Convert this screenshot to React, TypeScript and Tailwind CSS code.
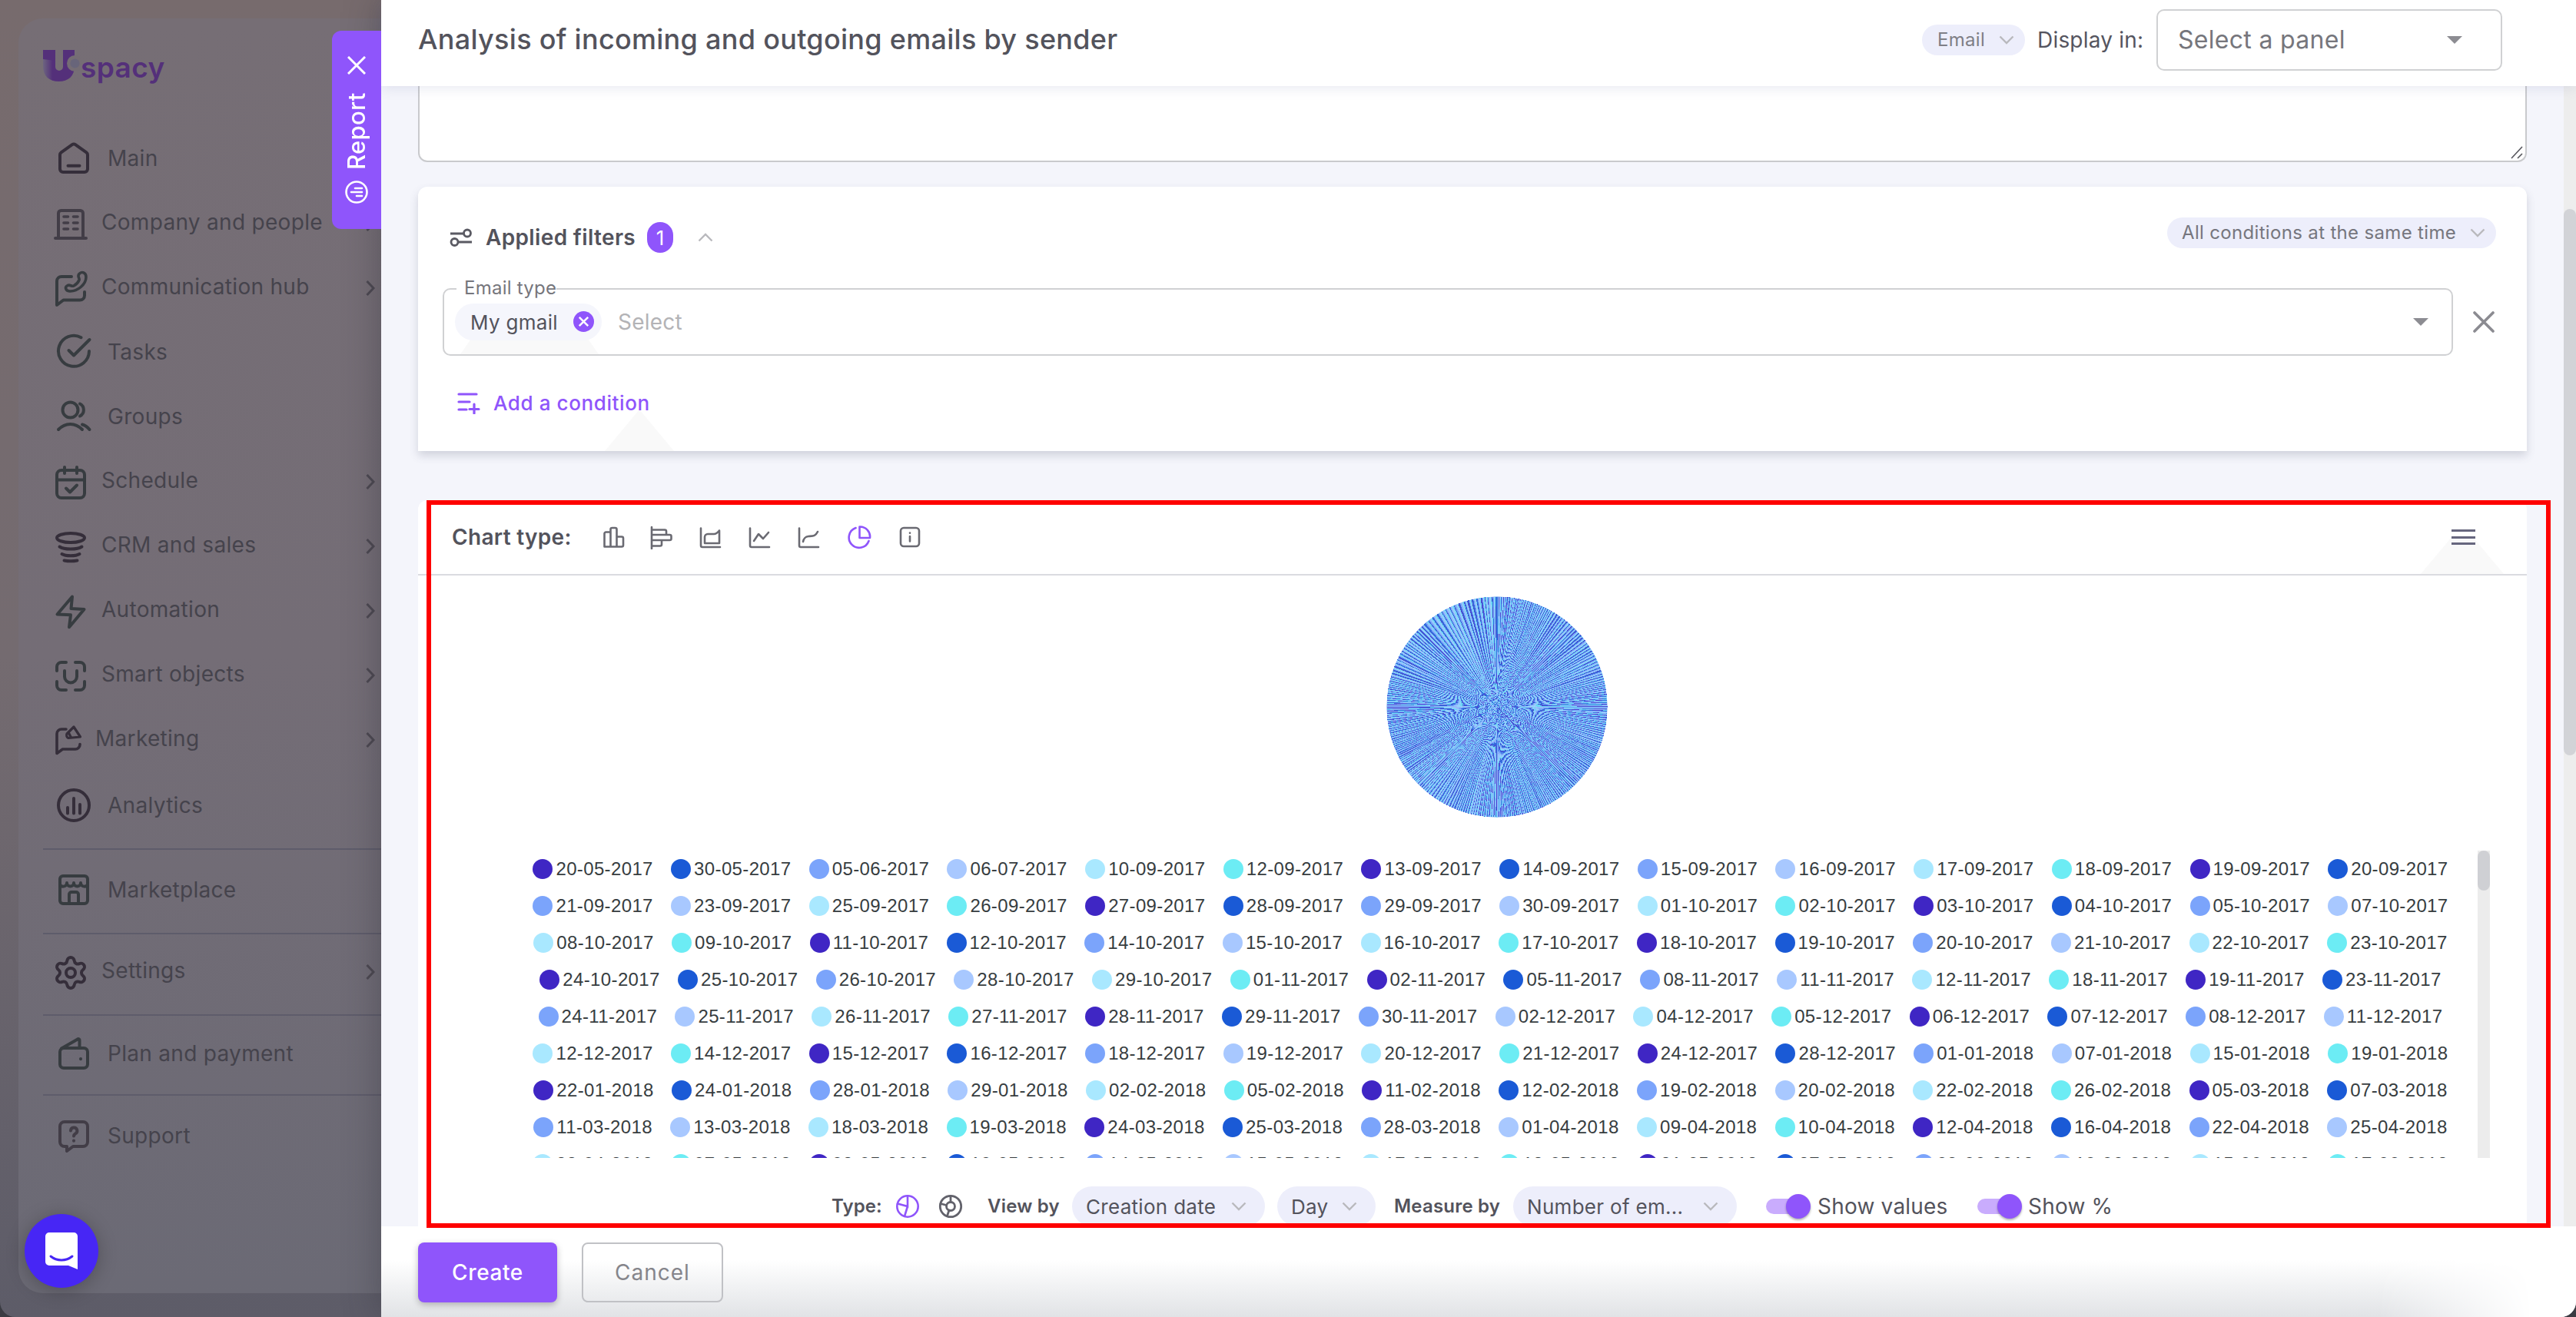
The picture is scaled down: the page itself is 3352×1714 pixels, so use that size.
import React from 'react';
import { Settings } from 'lucide-react';

interface IconProps {
  className?: string;
  children: React.ReactNode;
}

const Icon: React.FC<IconProps> = ({ className = '', children }) => (
  <svg
    viewBox="0 0 48 48"
    className={`size-12 shrink-0 ${className}`}
    fill="none"
    stroke="currentColor"
    strokeWidth="4"
    strokeLinecap="round"
    strokeLinejoin="round"
  >
    {children}
  </svg>
);

const HomeIcon = () => (
  <Icon className="text-[#352e3a]">
    <path d="M6 19.5a4 4 0 0 1 1.6-3.2L22 6.2a3.4 3.4 0 0 1 4 0l14.4 10.1a4 4 0 0 1 1.6 3.2V38a4 4 0 0 1-4 4H10a4 4 0 0 1-4-4Z" />
    <path d="M16.5 33.8h15" />
  </Icon>
);

const CompanyIcon = () => (
  <Icon className="text-[#423d47]">
    <path d="M8 42V9.5A3.5 3.5 0 0 1 11.5 6h25A3.5 3.5 0 0 1 40 9.5V42M4 42h40" />
    <path d="M15 14h5.5M27.5 14H33M15 22h5.5M27.5 22H33M15 30h5.5M27.5 30H33" strokeWidth="3.6" />
  </Icon>
);

const HubIcon = () => (
  <Icon className="text-[#373c40]">
    <path d="M25 8H12a6 6 0 0 0-6 6v31l8.5-6.5H36a6 6 0 0 0 6-6V28" />
    <path d="M35 4.5c3.5-4 9-1.5 9 4C44 18 33 27.5 22.5 27c-5.5-.5-6.5-5.5-2.5-7.5 3.5-1.5 5 2 8 .5 2.5-1.5 6-5 7-7.5 1-3-3-4.5 0-8Z" strokeWidth="3.6" />
  </Icon>
);

const TasksIcon = () => (
  <Icon className="text-[#373c40]">
    <path d="M33.5 5.2A20 20 0 1 0 44 23" />
    <path d="m17.5 22 6.5 6.5L44.5 8" />
  </Icon>
);

const GroupsIcon = () => (
  <Icon className="text-[#373c40]">
    <circle cx="19.5" cy="15.5" r="10" />
    <path d="M32 7.5a9 9 0 0 1 0 16M4 41c9-9.5 22-9.5 31 0M35 34.5c4 1 7 3.5 9.5 6.5" />
  </Icon>
);

const ScheduleIcon = () => (
  <Icon className="text-[#373c40]">
    <rect x="6" y="8" width="36" height="36" rx="6" />
    <path d="M6 20.5h36M16 4v8M32 4v8M18 31.5l5 5 9-9" />
  </Icon>
);

const CrmIcon = () => (
  <Icon className="text-[#352e3a]">
    <ellipse cx="24" cy="12" rx="18" ry="6" />
    <path d="M9.5 23.5c6 4 23 4 29 0M12.5 33c5 3 18 3 23 0M15.5 41.5c5 1 12 1 17 0" />
  </Icon>
);

const BoltIcon = () => (
  <Icon className="text-[#373c40]">
    <path d="M26 4.5 6.5 27.5l17.5.8-2 16L41.5 21 24.5 20Z" />
  </Icon>
);

const SmartIcon = () => (
  <Icon className="text-[#373c40]">
    <path d="M18 6h-6a6 6 0 0 0-6 6v5M30 6h6a6 6 0 0 1 6 6v5M6 31v5a6 6 0 0 0 6 6h6M42 31v5a6 6 0 0 1-6 6h-6" />
    <path d="M16 17v7.5a8 8 0 0 0 16 0V17" />
  </Icon>
);

const MarketingIcon = () => (
  <Icon className="text-[#352e3a]">
    <path d="M21 9h-6a6 6 0 0 0-6 6v25.5L16.5 35H33a6 6 0 0 0 6-6v-.5" strokeWidth="3.6" />
    <path d="m31 6 8.5 13L24 20.5a4 4 0 0 1-2-5.5ZM24.5 14l3 6" strokeWidth="3.2" />
  </Icon>
);

const AnalyticsIcon = () => (
  <Icon className="text-[#352e3a]">
    <circle cx="24" cy="24" r="20" />
    <path d="M16 27v7.5M24 15v19.5M32 23v11.5" />
  </Icon>
);

const MarketplaceIcon = () => (
  <Icon className="text-[#373c40]">
    <rect x="6" y="6" width="36" height="36" rx="4" />
    <path d="M6 16c0 5 9 5 9-1 0 6 9 6 9 0 0 6 9 6 9 0 0 6 9 6 9 1M18 42V30a3 3 0 0 1 3-3h6a3 3 0 0 1 3 3v12" />
  </Icon>
);

const WalletIcon = () => (
  <Icon className="text-[#373c40]">
    <rect x="6" y="17" width="36" height="26" rx="5" />
    <path d="M8 17.5 29 5.5a1.5 1.5 0 0 1 2.5 1.3V17M33 31v.2" />
  </Icon>
);

const SupportIcon = () => (
  <Icon className="text-[#423d47]">
    <path d="M12 6h24a6 6 0 0 1 6 6v20a6 6 0 0 1-6 6H23l-8 6v-6h-3a6 6 0 0 1-6-6V12a6 6 0 0 1 6-6Z" />
    <path d="M20 17.5a4.2 4.2 0 1 1 6 4c-1.5 1-2 1.5-2 3M24 30.5v.2" />
  </Icon>
);

const ChevronRight = () => (
  <svg viewBox="0 0 12 20" className="w-3 h-5 mr-2 ml-auto mb-0.5 shrink-0 text-[#4c4851]" fill="none" stroke="currentColor" strokeWidth="3">
    <path d="m1.5 1 8.5 9-8.5 9" />
  </svg>
);

const ChevronDown = ({ className = '' }: { className?: string }) => (
  <svg viewBox="0 0 20 12" className={`w-5 h-3 shrink-0 text-[#b9b9bd] ${className}`} fill="none" stroke="currentColor" strokeWidth="2.4">
    <path d="m1.5 1.5 8.5 8.5 8.5-8.5" />
  </svg>
);

const CaretDown = ({ className = '' }: { className?: string }) => (
  <svg viewBox="0 0 20 10" className={`w-5 h-2.5 shrink-0 ${className}`} fill="#8c8c92">
    <path d="M0 0h20L10 10Z" />
  </svg>
);

const NavItem = ({ icon, label }: { icon: React.ReactNode; label: string }) => (
  <div className="flex items-center h-[84px] pl-12">
    {icon}
    <span className="ml-[20px]">{label}</span>
  </div>
);

const NavGroup = ({ icon, label }: { icon: React.ReactNode; label: string }) => (
  <div className="flex items-center h-[84px] pl-11 pt-1">
    {icon}
    <span className="ml-4 mb-1.5">{label}</span>
    <ChevronRight />
  </div>
);

const Divider = ({ className = '' }: { className?: string }) => (
  <div className={`ml-8 h-0.5 shrink-0 bg-[#5e5c6b] ${className}`} />
);

const Logo = () => (
  <div className="flex h-[140px] pl-8 pt-[41px]">
    <svg viewBox="0 0 48 48" className="size-12 shrink-0">
      <defs>
        <linearGradient id="logo" x1="0" y1="0" x2="1" y2="0">
          <stop offset="0" stopColor="#6d6580" />
          <stop offset="0.3" stopColor="#54307a" />
        </linearGradient>
      </defs>
      <path d="M0 0h16v22a5 5 0 0 0 10 0V0h15v21c0 13-8 20-20.5 20S0 34 0 21Z" fill="url(#logo)" />
      <path d="M0 0h16v14L0 12Z" fill="#54307a" />
      <circle cx="41.5" cy="17.5" r="10.5" fill="#756d74" />
      <circle cx="41.5" cy="17.5" r="6" fill="#68657a" />
    </svg>
    <span className="mt-[1px] ml-[1px] text-[37px] leading-[44px] font-semibold tracking-[0.4px] text-[#54307a]">spacy</span>
  </div>
);

const Sidebar = () => (
  <aside className="w-[496px] shrink-0 pl-6 pt-6 pb-[31px] bg-linear-to-b from-[#776b6d] via-[#746b70] to-[#5d5c68]">
    <div className="flex flex-col h-[1659px] rounded-l-[32px] bg-linear-to-b from-[#766e75] via-[#746d76] to-[#6b6a75] text-[28px] tracking-[0.3px] text-[#45434c] whitespace-nowrap">
      <Logo />
      <NavItem icon={<HomeIcon />} label="Main" />
      <NavGroup icon={<CompanyIcon />} label="Company and people" />
      <NavGroup icon={<HubIcon />} label="Communication hub" />
      <NavItem icon={<TasksIcon />} label="Tasks" />
      <NavItem icon={<GroupsIcon />} label="Groups" />
      <NavGroup icon={<ScheduleIcon />} label="Schedule" />
      <NavGroup icon={<CrmIcon />} label="CRM and sales" />
      <NavGroup icon={<BoltIcon />} label="Automation" />
      <NavGroup icon={<SmartIcon />} label="Smart objects" />
      <div className="flex items-center h-[84px] pl-[41px] pt-1">
        <MarketingIcon />
        <span className="ml-[11px] mb-1.5">Marketing</span>
        <ChevronRight />
      </div>
      <div className="pt-0.5 -mb-0.5">
        <NavItem icon={<AnalyticsIcon />} label="Analytics" />
      </div>
      <Divider className="mt-4 mb-2.5" />
      <NavItem icon={<MarketplaceIcon />} label="Marketplace" />
      <Divider className="mt-3.5 mb-1.5" />
      <NavGroup icon={<Settings className="size-12 shrink-0 text-[#352e3a]" />} label="Settings" />
      <Divider className="mt-3.5 mb-[7px]" />
      <NavItem icon={<WalletIcon />} label="Plan and payment" />
      <Divider className="mt-[11px] mb-2.5" />
      <NavItem icon={<SupportIcon />} label="Support" />
    </div>
  </aside>
);

// Tab that sticks out of the drawer on its left side
const ReportTab = () => (
  <div className="absolute left-[432px] top-10 w-16 h-[258px] rounded-l-[12px] bg-[#8f55fb] text-white flex flex-col items-center pt-[33px] z-20">
    <svg viewBox="0 0 24 24" className="size-6 shrink-0" fill="none" stroke="currentColor" strokeWidth="3">
      <path d="m1 1 22 22M23 1 1 23" />
    </svg>
    <span className="mt-[14px] h-[110px] [writing-mode:vertical-rl] rotate-180 text-[31px] leading-[40px] font-medium tracking-[0.3px] flex items-center">Report</span>
    <svg viewBox="0 0 30 30" className="size-[30px] mt-3.5 shrink-0 -rotate-90" fill="none" stroke="currentColor" strokeWidth="2.6" strokeLinecap="round">
      <circle cx="15" cy="15" r="13.5" />
      <path d="M10 15v7M15 8v14M20 13v9" />
    </svg>
  </div>
);

const Header = () => (
  <header className="relative z-10 flex items-center h-28 pb-3.5 pl-12 pr-24 bg-white shadow-[0_2px_16px_rgba(100,105,160,0.16)] shrink-0 whitespace-nowrap">
    <h1 className="mt-[4px] text-[36px] font-medium tracking-[0.29px] text-[#53535c]">Analysis of incoming and outgoing emails by sender</h1>
    <div className="flex items-center ml-auto mt-1.5">
      <div className="flex items-center justify-between w-[134px] h-10 pl-5 pr-[14px] rounded-full bg-[#edeefb] text-[24px] tracking-[0.3px] text-[#7f7f86]">
        Email
        <ChevronDown />
      </div>
      <span className="w-[155px] ml-4 text-[28px] tracking-[0.2px] text-[#55555f]">Display in:</span>
      <div className="flex items-center justify-between w-[450px] h-20 pl-[26px] pr-[50px] rounded-[10px] border-2 border-[#d0d1d3] text-[32px] tracking-[0.3px] text-[#76767c]">
        Select a panel
        <CaretDown />
      </div>
    </div>
  </header>
);

const FiltersCard = () => (
  <section className="relative h-[344px] shrink-0 mt-8 rounded-t-[12px] bg-white shadow-[0_6px_12px_rgba(70,75,100,0.2)] whitespace-nowrap">
    <svg viewBox="0 0 90 54" className="absolute left-[243px] bottom-0 w-[90px] h-[54px]" fill="#f9f9f9">
      <path d="M45 0 90 54H0Z" />
    </svg>
    <div className="flex items-center h-[132px] pl-[41px] pr-10">
      <svg viewBox="0 0 30 24" className="w-[30px] h-6" fill="none" stroke="#5a5a63" strokeWidth="2.8">
        <path d="M1 7h17M12 18h17" />
        <circle cx="23" cy="6.5" r="4.5" />
        <circle cx="6.5" cy="18" r="4.5" />
      </svg>
      <span className="ml-[17px] text-[28px] font-semibold tracking-[0.35px] text-[#53535c]">Applied filters</span>
      <span className="flex items-center justify-center w-[34px] h-10 ml-[15px] rounded-full bg-[#8f55fb] text-[26px] text-white">1</span>
      <ChevronDown className="ml-8 rotate-180" />
      <div className="flex items-center justify-between w-[428px] h-10 mb-3 ml-auto pl-[19px] pr-[14px] rounded-full bg-[#edeefb] text-[24px] tracking-[0.33px] text-[#76767e]">
        All conditions at the same time
        <ChevronDown />
      </div>
    </div>
    <div className="flex items-center pl-8">
      <div className="relative flex items-center w-[2616px] h-[88px] pl-3.5 rounded-[10px] border-2 border-[#d0d1d3]">
        <svg viewBox="0 0 180 20" className="absolute left-[21px] bottom-0 w-[180px] h-5" fill="#f9f9f9">
          <path d="M14 0h152l14 20H0Z" />
        </svg>
        <span className="absolute left-4 -top-[17px] pl-[10px] bg-white text-[24px] leading-[30px] tracking-[0.25px] text-[#76767c]">Email type</span>
        <div className="relative flex items-center w-[191px] h-[48px] pl-5 rounded-full bg-[#f5f6fc] text-[26px] tracking-[0.3px] text-[#53535c]">
          My gmail
          <svg viewBox="0 0 26 26" className="size-[27px] absolute left-[154px] top-[10px]">
            <circle cx="13" cy="13" r="13" fill="#8f55fb" />
            <path d="m7.5 7.5 11 11M18.5 7.5l-11 11" stroke="#fff" strokeWidth="2.4" />
          </svg>
        </div>
        <span className="ml-[21px] text-[28px] tracking-[0.2px] text-[#b3b3b6]">Select</span>
        <CaretDown className="ml-auto mr-[30px]" />
      </div>
      <svg viewBox="0 0 28 28" className="size-7 ml-[26px]" fill="none" stroke="#8b8b91" strokeWidth="3.6" strokeLinecap="round">
        <path d="m2 2 24 24M26 2 2 26" />
      </svg>
    </div>
    <div className="relative flex items-center h-[123px] pl-[50px] text-[26px] font-medium tracking-[0.6px] text-[#8f55fb]">
      <svg viewBox="0 0 32 28" className="w-8 h-7" fill="none" stroke="currentColor" strokeWidth="3.2" strokeLinecap="round">
        <path d="M3 2h23M3 12h14M3 22h10M23 15v12M17 21.5h12" />
      </svg>
      <span className="ml-[16px]">Add a condition</span>
    </div>
  </section>
);

const ChartTypes = () => (
  <div className="flex items-center ml-[39px] text-[#6a6a72] [&>svg]:size-8 [&>svg]:shrink-0">
    <svg viewBox="0 0 32 32" fill="none" stroke="currentColor" strokeWidth="2.6" strokeLinejoin="round">
      <path d="M3.5 28.5V11.5a2 2 0 0 1 2-2h6V6a2 2 0 0 1 2-2h4a2 2 0 0 1 2 2v9.5h6.5a2 2 0 0 1 2 2v9a2 2 0 0 1-2 2ZM11.5 9.5v19M19.5 15.5v13" />
    </svg>
    <svg viewBox="0 0 32 32" className="ml-[30px]" fill="none" stroke="currentColor" strokeWidth="2.6" strokeLinecap="round" strokeLinejoin="round">
      <path d="M3 3v28M3 6.5h17a2 2 0 0 1 2 2V13H3M22 13h4.5a2 2 0 0 1 2 2v3a2 2 0 0 1-2 2H3M16 20v5.5a2 2 0 0 1-2 2H3" />
    </svg>
    <svg viewBox="0 0 32 32" className="ml-[31px]" fill="none" stroke="currentColor" strokeWidth="2.6" strokeLinecap="round" strokeLinejoin="round">
      <path d="M4 4.5V27a2 2 0 0 0 2 2h23M9 24V16a4 4 0 0 1 4-4h8c3 0 5-2 7-4.5V24Z" />
    </svg>
    <svg viewBox="0 0 32 32" className="ml-[32px]" fill="none" stroke="currentColor" strokeWidth="2.6" strokeLinecap="round" strokeLinejoin="round">
      <path d="M4 4.5V27a2 2 0 0 0 2 2h23M9 21l6-9 6 6 7-8" />
    </svg>
    <svg viewBox="0 0 32 32" className="ml-[32px]" fill="none" stroke="currentColor" strokeWidth="2.6" strokeLinecap="round" strokeLinejoin="round">
      <path d="M4 4.5V27a2 2 0 0 0 2 2h23M9 22c1-5 3-6.5 7-7 6-.5 9 0 12-6" />
    </svg>
    <svg viewBox="0 0 32 32" className="ml-[34px] text-[#8f55fb]" fill="none" stroke="currentColor" strokeWidth="2.6" strokeLinecap="round" strokeLinejoin="round">
      <path d="M11.5 4A13.3 13.3 0 1 0 28.5 21M16.5 2.5A13 13 0 0 1 30 17H16.5Z" />
    </svg>
    <svg viewBox="0 0 32 32" className="ml-[34px]" fill="none" stroke="currentColor" strokeWidth="2.6" strokeLinecap="round" strokeLinejoin="round">
      <rect x="4" y="4" width="24" height="24" rx="4" />
      <path d="M16 15v6.5M16 10.5v.2" />
    </svg>
  </div>
);

const PALETTE = ['#3f26c4', '#1a5ad6', '#7ba4fb', '#a8c8ff', '#a9e8ff', '#6cecf4'];
const DOTS = ['bg-[#3f26c4]', 'bg-[#1a5ad6]', 'bg-[#7ba4fb]', 'bg-[#a8c8ff]', 'bg-[#a9e8ff]', 'bg-[#6cecf4]'];

const noise = (i: number) => {
  const x = Math.sin(i * 12.9898) * 43758.5453;
  return x - Math.floor(x);
};

const sliceAngle = (deg: number, i: number) => {
  const wobble = 0.3 + noise(i) * 1.4;
  if (deg > 315 && deg < 316 && i % 6 === 0) return 1.6;
  if (deg > 318 && deg < 360) return 0.42 * wobble;
  if (deg > 286 && deg < 318) return 0.3 * wobble;
  if (deg > 30 && deg < 72) return 0.27 * wobble;
  if (deg > 190 && deg < 220) return 0.24 * wobble;
  return 0.18 * wobble;
};

const buildSlices = () => {
  const list: { d: string; fill: string }[] = [];
  const r = 143.5;
  const point = (deg: number) => {
    const a = ((deg - 90) * Math.PI) / 180;
    return `${(144 + r * Math.cos(a)).toFixed(2)} ${(144 + r * Math.sin(a)).toFixed(2)}`;
  };
  let deg = 0;
  let i = 0;
  while (deg < 360) {
    const next = Math.min(360, deg + sliceAngle(deg, i));
    list.push({ d: `M144 144L${point(deg)}L${point(next)}Z`, fill: PALETTE[i % PALETTE.length] });
    deg = next;
    i += 1;
  }
  return list;
};

const slices = buildSlices();

const PieChart = () => (
  <svg viewBox="0 0 288 288" className="size-[288px] shrink-0">
    <circle cx="144" cy="144" r="143.5" fill="#689dec" />
    <g shapeRendering="crispEdges">
      {slices.map((s, i) => (
        <path key={i} d={s.d} fill={s.fill} />
      ))}
    </g>
    <circle cx="144" cy="144" r="143.5" fill="#6aa2f2" opacity="0.3" />
  </svg>
);

const legendRows: string[][] = [
  ['20-05-2017', '30-05-2017', '05-06-2017', '06-07-2017', '10-09-2017', '12-09-2017', '13-09-2017', '14-09-2017', '15-09-2017', '16-09-2017', '17-09-2017', '18-09-2017', '19-09-2017', '20-09-2017'],
  ['21-09-2017', '23-09-2017', '25-09-2017', '26-09-2017', '27-09-2017', '28-09-2017', '29-09-2017', '30-09-2017', '01-10-2017', '02-10-2017', '03-10-2017', '04-10-2017', '05-10-2017', '07-10-2017'],
  ['08-10-2017', '09-10-2017', '11-10-2017', '12-10-2017', '14-10-2017', '15-10-2017', '16-10-2017', '17-10-2017', '18-10-2017', '19-10-2017', '20-10-2017', '21-10-2017', '22-10-2017', '23-10-2017'],
  ['24-10-2017', '25-10-2017', '26-10-2017', '28-10-2017', '29-10-2017', '01-11-2017', '02-11-2017', '05-11-2017', '08-11-2017', '11-11-2017', '12-11-2017', '18-11-2017', '19-11-2017', '23-11-2017'],
  ['24-11-2017', '25-11-2017', '26-11-2017', '27-11-2017', '28-11-2017', '29-11-2017', '30-11-2017', '02-12-2017', '04-12-2017', '05-12-2017', '06-12-2017', '07-12-2017', '08-12-2017', '11-12-2017'],
  ['12-12-2017', '14-12-2017', '15-12-2017', '16-12-2017', '18-12-2017', '19-12-2017', '20-12-2017', '21-12-2017', '24-12-2017', '28-12-2017', '01-01-2018', '07-01-2018', '15-01-2018', '19-01-2018'],
  ['22-01-2018', '24-01-2018', '28-01-2018', '29-01-2018', '02-02-2018', '05-02-2018', '11-02-2018', '12-02-2018', '19-02-2018', '20-02-2018', '22-02-2018', '26-02-2018', '05-03-2018', '07-03-2018'],
  ['11-03-2018', '13-03-2018', '18-03-2018', '19-03-2018', '24-03-2018', '25-03-2018', '28-03-2018', '01-04-2018', '09-04-2018', '10-04-2018', '12-04-2018', '16-04-2018', '22-04-2018', '25-04-2018'],
  ['28-04-2018', '07-05-2018', '08-05-2018', '10-05-2018', '14-05-2018', '15-05-2018', '17-05-2018', '18-05-2018', '21-05-2018', '27-05-2018', '09-06-2018', '10-06-2018', '15-06-2018', '17-06-2018'],
];

const Legend = () => (
  <div className="flex w-[2586px] h-[400px] ml-[110px] mt-[43px] overflow-hidden shrink-0">
    <div className="flex-1 pl-px">
      {legendRows.map((row, r) => (
        <div key={r} className="flex items-center justify-center gap-[23.3px] h-12 font-['Liberation_Sans',sans-serif] text-[24px] tracking-[0.36px] text-[#373d3f] whitespace-nowrap">
          {row.map((date, c) => (
            <div key={date} className="flex items-center gap-1">
              <span className={`size-[26px] rounded-full ${DOTS[(r * 14 + c) % DOTS.length]}`} />
              {date}
            </div>
          ))}
        </div>
      ))}
    </div>
    <div className="w-4 bg-[#ececec]">
      <div className="h-[52px] rounded-full bg-[#cfd0d4]" />
    </div>
  </div>
);

const Pill = ({ className, label }: { className: string; label: string }) => (
  <div className={`flex items-center justify-between h-[52px] pl-[18px] pr-6 rounded-full bg-[#edeefb] text-[26px] tracking-[0.3px] text-[#53535c] shrink-0 ${className}`}>
    {label}
    <ChevronDown />
  </div>
);

const Switch = () => (
  <div className="flex items-center w-[58px] shrink-0">
    <div className="w-[52px] h-5 rounded-full bg-[#c9acfd]" />
    <div className="size-8 -ml-[26px] shrink-0 rounded-full bg-[#8f55fb] shadow-[0_2px_3px_rgba(0,0,0,0.3)]" />
  </div>
);

const Controls = () => (
  <div className="flex items-center h-[52px] mt-[37px] pl-[538px] whitespace-nowrap text-[28px] tracking-[0.2px] text-[#53535c]">
    <span className="w-[83px] shrink-0 text-[24px] font-semibold tracking-[0.1px]">Type:</span>
    <svg viewBox="0 0 32 32" className="size-8 shrink-0 text-[#8f55fb]" fill="none" stroke="currentColor" strokeWidth="2.6" strokeLinecap="round">
      <circle cx="16" cy="16" r="13.7" />
      <path d="M16 3v13L3 12.5M16 16l-4 13" />
    </svg>
    <svg viewBox="0 0 32 32" className="size-8 ml-6 shrink-0 text-[#62626b]" fill="none" stroke="currentColor" strokeWidth="2.8" strokeLinecap="round">
      <circle cx="16" cy="16" r="13.7" />
      <circle cx="16" cy="16" r="5.5" />
      <path d="M16 3v7.5M3 12.5l7.5 2M14 21l-2.5 7.5" />
    </svg>
    <span className="w-[110px] ml-[32px] shrink-0 text-[24px] font-semibold tracking-[0.2px]">View by</span>
    <Pill className="w-[251px]" label="Creation date" />
    <Pill className="w-32 ml-4" label="Day" />
    <span className="w-[155px] ml-6 shrink-0 text-[24px] font-semibold tracking-[0.2px]">Measure by</span>
    <Pill className="w-[291px] mr-[38px]" label="Number of em..." />
    <Switch />
    <span className="w-[208px] ml-[9px] shrink-0">Show values</span>
    <Switch />
    <span className="ml-[8px]">Show %</span>
  </div>
);

const ChartCard = () => (
  <section className="h-[1000px] mt-16 rounded-t-[12px] bg-white shrink-0">
    <div className="relative flex items-center h-[98px] pl-11 pr-[67px] border-b-2 border-[#dadbe0] whitespace-nowrap">
      <svg viewBox="0 0 108 50" className="absolute right-[30px] bottom-0 w-[108px] h-[50px]" fill="#f9f9f9">
        <path d="M42 0h24l42 50H0Z" />
      </svg>
      <span className="text-[28px] font-semibold tracking-[0.3px] text-[#53535c]">Chart type:</span>
      <ChartTypes />
      <div className="relative flex flex-col justify-between w-[31px] h-5 ml-auto">
        <div className="h-[3px] bg-[#66667e]" />
        <div className="h-[3px] bg-[#66667e]" />
        <div className="h-[3px] bg-[#66667e]" />
      </div>
    </div>
    <div className="flex justify-center pt-[27px] pl-16">
      <PieChart />
    </div>
    <Legend />
    <Controls />
  </section>
);

const Footer = () => (
  <footer className="relative z-10 flex h-[118px] pl-12 pt-[21px] bg-white shrink-0">
    <div className="absolute inset-x-0 bottom-0 h-[74px] bg-linear-to-b from-white to-[#e1e3e6] mask-[linear-gradient(to_right,black_91%,transparent_98%)]" />
    <button className="relative w-[181px] h-[78px] rounded-[8px] bg-[#8f55fb] shadow-[0_3px_8px_rgba(0,0,0,0.25)] text-[28px] font-medium tracking-[0.6px] text-white">Create</button>
    <button className="relative w-[184px] h-[78px] ml-8 rounded-[8px] border-2 border-[#c0c1c5] text-[28px] tracking-[1px] text-[#85858b]">Cancel</button>
  </footer>
);

const App: React.FC = () => {
  return (
    <div className="w-[3352px] h-[1714px] bg-[#3a3b42] font-['Inter',sans-serif]">
      <div className="relative flex w-full h-full overflow-hidden rounded-b-[20px]">
        <Sidebar />
        <main className="relative flex flex-col flex-1 bg-[#f4f5fb] shadow-[0_0_44px_rgba(50,50,60,0.45)]">
          <Header />
          <div className="flex h-[1484px] overflow-hidden shrink-0">
            <div className="flex flex-col w-[2840px] pl-12 pr-12 shrink-0">
              <div className="relative h-[99px] shrink-0 rounded-b-[12px] border-2 border-t-0 border-[#c9cacd] bg-white">
                <svg viewBox="0 0 18 18" className="absolute right-0.5 bottom-0.5 size-[18px]" stroke="#55555c" strokeWidth="1.6">
                  <path d="M2 17 16 2M10 17l6-6" />
                </svg>
              </div>
              <FiltersCard />
              <ChartCard />
            </div>
            <div className="w-4 pt-40 bg-[#ededed] shrink-0">
              <div className="h-[711px] rounded-full bg-[#d2d3d7]" />
            </div>
          </div>
          <Footer />
        </main>
        <ReportTab />

        {/* Highlight frame around the chart area */}
        <div className="absolute left-[555px] top-[651px] w-[2764px] h-[947px] border-[6px] border-[#fe0000] z-20" />

        <div className="absolute left-8 top-[1580px] size-24 rounded-full bg-[#4726f5] shadow-[0_4px_24px_rgba(0,0,0,0.25)] flex items-center justify-center">
          <svg viewBox="0 0 42 50" className="w-[42px] h-[50px]">
            <path d="M5 1h32a5 5 0 0 1 5 5v43l-12-5H5a5 5 0 0 1-5-5V6a5 5 0 0 1 5-5Z" fill="#fff" />
            <path d="M7 32c8 6.5 20 6.5 28 0" fill="none" stroke="#4726f5" strokeWidth="3" strokeLinecap="round" />
          </svg>
        </div>
      </div>
    </div>
  );
};

export default App;
